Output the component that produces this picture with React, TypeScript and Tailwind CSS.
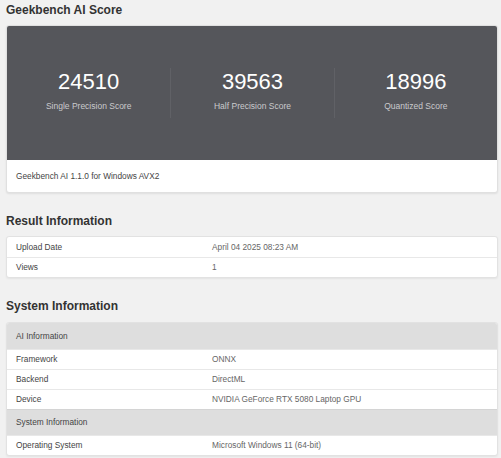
const scores = [
  { value: '24510', label: 'Single Precision Score' },
  { value: '39563', label: 'Half Precision Score' },
  { value: '18996', label: 'Quantized Score' },
];

type Row = { kind: 'header'; title: string } | { kind: 'row'; name: string; value: string };

const resultRows: Row[] = [
  { kind: 'row', name: 'Upload Date', value: 'April 04 2025 08:23 AM' },
  { kind: 'row', name: 'Views', value: '1' },
];

const systemRows: Row[] = [
  { kind: 'header', title: 'AI Information' },
  { kind: 'row', name: 'Framework', value: 'ONNX' },
  { kind: 'row', name: 'Backend', value: 'DirectML' },
  { kind: 'row', name: 'Device', value: 'NVIDIA GeForce RTX 5080 Laptop GPU' },
  { kind: 'header', title: 'System Information' },
  { kind: 'row', name: 'Operating System', value: 'Microsoft Windows 11 (64-bit)' },
];

function InfoTable({ rows }: { rows: Row[] }) {
  return (
    <div className="overflow-hidden rounded-[3px] border border-[#e2e2e2] bg-white shadow-[0_1px_2px_rgba(0,0,0,0.06)]">
      {rows.map((row, i) =>
        row.kind === 'header' ? (
          <div
            key={i}
            className={`flex h-[26px] items-center bg-[#dedede] pl-[9px] text-[8.3px] text-[#444] ${i > 0 ? 'border-t border-[#d4d4d4]' : ''}`}
          >
            {row.title}
          </div>
        ) : (
          <div
            key={i}
            className={`flex h-[20px] items-center text-[8.3px] ${i > 0 ? 'border-t border-[#e8e8e8]' : ''}`}
          >
            <span className="w-[205px] shrink-0 pl-[9px] text-[#444]">{row.name}</span>
            <span className="text-[#666]">{row.value}</span>
          </div>
        ),
      )}
    </div>
  );
}

export default function App() {
  return (
    <div className="min-h-screen bg-[#f1f1f1] pl-[6px] pr-[3px] pt-[2px] font-['Liberation_Sans',Arial,sans-serif]">
      <h2 className="h-[23px] text-[12px] font-bold leading-[16px] text-[#333]">Geekbench AI Score</h2>
      <div className="overflow-hidden rounded-[3px] border border-[#e0e0e0] bg-white shadow-[0_1px_2px_rgba(0,0,0,0.08)]">
        <div className="grid h-[134px] grid-cols-3 items-center bg-[#55565b]">
          {scores.map((s, i) => (
            <div
              key={s.label}
              className={`flex h-[50px] flex-col items-center justify-center ${i > 0 ? 'border-l border-[#606166]' : ''}`}
            >
              <span className="-mt-[4px] text-[22px] leading-[24px] text-white">{s.value}</span>
              <span className="mt-[6px] text-[8.5px] text-[#cacacd]">{s.label}</span>
            </div>
          ))}
        </div>
        <div className="flex h-[32px] items-center pl-[9px] text-[8.3px] text-[#444]">
          Geekbench AI 1.1.0 for Windows AVX2
        </div>
      </div>

      <h2 className="mt-[20px] h-[23px] text-[12px] font-bold leading-[16px] text-[#333]">Result Information</h2>
      <InfoTable rows={resultRows} />

      <h2 className="mt-[20px] h-[24px] text-[12px] font-bold leading-[16px] text-[#333]">System Information</h2>
      <InfoTable rows={systemRows} />
    </div>
  );
}
